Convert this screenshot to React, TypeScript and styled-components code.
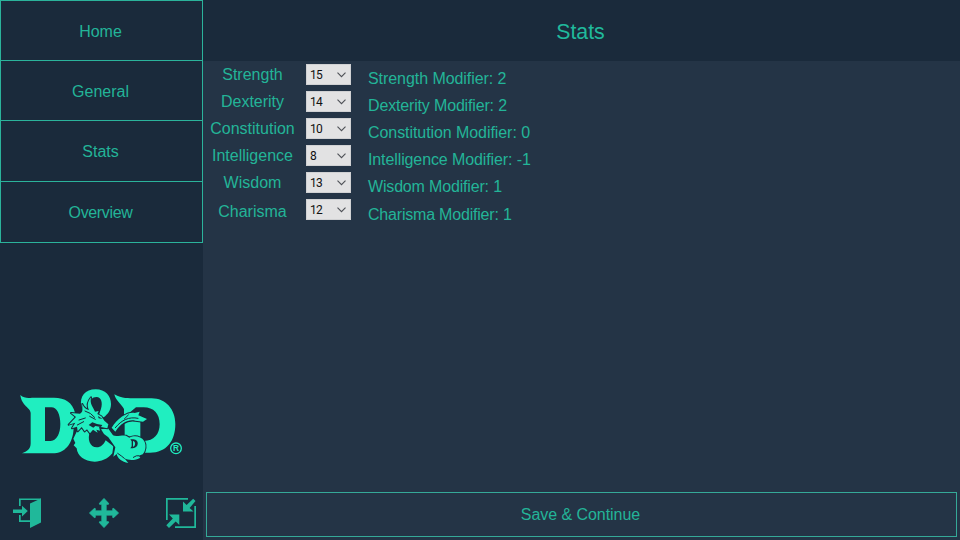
import React, { useState } from 'react';
import styled, { createGlobalStyle } from 'styled-components';

const GlobalStyle = createGlobalStyle`
  * { box-sizing: border-box; }
  body { margin: 0; overflow: hidden; background: #1a2a3b; }
  button { appearance: none; margin: 0; padding: 0; background: none; border: 0; color: inherit; font: inherit; letter-spacing: inherit; }
`;

const Window = styled.div`
  display: grid;
  grid-template-columns: 203px 1fr;
  width: 960px;
  height: 540px;
  background: #1a2a3b;
  color: #23b498;
  font: 16px/20px "Liberation Sans", Arial, sans-serif;
`;

const Sidebar = styled.aside`
  display: flex;
  flex-direction: column;
`;

const Nav = styled.nav`
  display: grid;
  grid-template-rows: 60px 60px 61px 62px;
  border: 0 solid #2bb39b;
  border-width: 0 1px 1px;
  height: 243px;
`;

const NavButton = styled.button<{ $tight: boolean }>`
  border-top: 1px solid #2bb39b;
  padding: ${p => (p.$tight ? '0 2px 0 0' : '2px 2px 0 0')};
  letter-spacing: ${p => (p.$tight ? '-0.35px' : '0')};
`;

const LogoArea = styled.div`
  height: 90px;
  margin: 137px 0 0 10px;
  svg { display: block; }
`;

const Tools = styled.div`
  display: flex;
  justify-content: space-between;
  margin-top: 27px;
  padding: 0 6px 0 12px;
`;

const ToolButton = styled.button`
  width: 32px;
  height: 32px;
  color: #20b89a;
  svg { display: block; }
`;

const Main = styled.main`
  display: flex;
  flex-direction: column;
`;

const Header = styled.header`
  display: flex;
  align-items: center;
  justify-content: center;
  height: 61px;
  padding: 3px 2px 0 0;
  font-size: 21.3px;
  color: #20b99c;
`;

const Panel = styled.section`
  display: flex;
  flex: 1;
  flex-direction: column;
  justify-content: space-between;
  padding: 0 3px 3px;
  background: #243446;
`;

const Stats = styled.div`
  display: grid;
  grid-template-rows: repeat(6, 27px);
  padding-top: 3px;
`;

const StatRow = styled.div`
  display: grid;
  grid-template-columns: 93px 7px 45px 17px 1fr;
`;

const StatLabel = styled.label<{ $drop: number }>`
  grid-column: 1;
  padding-top: ${p => 1 + p.$drop}px;
  text-align: center;
`;

const ModifierText = styled.span<{ $drop: number; $spacing: number }>`
  grid-column: 5;
  padding-top: ${p => 5 + p.$drop}px;
  letter-spacing: ${p => p.$spacing}px;
`;

const Picker = styled.button`
  grid-column: 3;
  display: flex;
  align-items: center;
  justify-content: space-between;
  height: 21px;
  padding: 0 4px 0 3px;
  border: 1px solid #d0d1d3;
  background: #e2e2e3;
  color: #111;
  font: 12px/18px Roboto, sans-serif;
  letter-spacing: -0.7px;
`;

const SaveButton = styled.button`
  height: 45px;
  border: 1px solid #35a998;
  padding-right: 2px;
  letter-spacing: -0.05px;
`;

const Chevron = () => (
  <svg width="9" height="6" viewBox="0 0 9 6" fill="none" stroke="#4e5157" strokeWidth="1.1">
    <path d="M.5 .7 4.5 4.7 8.5 .7" />
  </svg>
);

const ExitIcon = () => (
  <svg width="32" height="32" viewBox="0 0 32 32" fill="currentColor">
    <path d="M7 9V1.5H29V3H8.7V9ZM7 18H8.7V23.3H18V25H7Z" />
    <path d="M18 6.5 29 1.5V25.5L18 31Z" />
    <path d="M1 12.5H10V8.8L15.8 14 10 19.5V16H1Z" />
  </svg>
);

const MoveIcon = () => (
  <svg width="32" height="32" viewBox="0 0 32 32" fill="currentColor" stroke="currentColor" strokeWidth="1" strokeLinejoin="round">
    <path d="M15 1.5 19.5 6.3V7.2H17.1V13.9H23.8V11.5H24.7L29.5 16 24.7 20.5H23.8V18.1H17.1V24.8H19.5V25.7L15 30.5 10.5 25.7V24.8H12.9V18.1H6.2V20.5H5.3L.5 16 5.3 11.5H6.2V13.9H12.9V7.2H10.5V6.3Z" />
  </svg>
);

const ShrinkIcon = () => (
  <svg width="32" height="32" viewBox="0 0 32 32" fill="currentColor">
    <path d="M1 1H23V2.7H2.7V23H1ZM29.3 9H31V31H10V29.3H29.3Z" />
    <path d="M18 4.5V14.5H28.5L24.6 10.9 30.5 4 28.2 1.7 21.6 8Z" />
    <path d="M4 17.5H14.3V28L10.7 24.4 4 31 1.3 28.3 7.8 21.4Z" />
  </svg>
);

const Logo = () => (
  <svg width="180" height="90" viewBox="0 0 540 270" fill="#20eec0">
    <path fillRule="evenodd" d="M31 45C41 54 53 55 66 53H132C165 53 188 68 195 98L190 155C186 190 166 220 127 220H36C51 214 62 208 62 190V99C62 83 35 79 31 45ZM105 82V183H122C141 182 151 159 151 132 151 104 141 82 124 82Z" />
    <path fillRule="evenodd" d="M313 43C337 57 355 54 376 55H425C467 55 496 88 496 132 496 184 469 218 420 218H388V183H402C431 183 449 163 449 133 449 101 431 82 401 82H378L342 112V87C333 71 316 60 313 43Z" />
    <path d="M344 120H391V180L344 166Z" />
    <g transform="translate(165 15)" stroke="#1a2a3b" strokeLinejoin="round">
      <path strokeWidth="0" fillRule="evenodd" d="M49 64C43 35 61 13 92 13 121 13 138 33 138 57 138 76 128 88 116 97L100 95 108 71C114 53 108 36 95 36 80 36 76 46 75 57L62 75Z" />
      <path strokeWidth="6" paintOrder="stroke" d="M40 130 76 138C65 163 75 187 95 187 108 187 116 179 122 166L145 184 142 205C128 222 108 230 89 230 58 230 37 212 35 190L26 181 31 174 25 161Z" />
      <path strokeWidth="6" paintOrder="stroke" d="M129 130 144 151C152 156 166 151 183 152L193 158C209 149 228 154 237 167 245 180 242 198 233 208L221 212 226 218C211 227 191 227 178 220L190 234C171 231 157 220 155 207L145 215 151 187 130 157 117 147 108 133Z" />
      <path strokeWidth="6" paintOrder="stroke" d="M140 128C160 96 190 80 209 84L224 80 220 91 246 102 234 110 211 107C189 103 170 112 151 140Z" />
      <path strokeWidth="6" paintOrder="stroke" d="M52 57C51 73 56 79 45 86L18 84 33 96 11 119 31 113 21 130 36 125 38 139 50 126 59 139 66 133 75 145 84 134 98 143 94 134 105 137 102 125 112 127 127 130 130 118 118 107 109 94 97 87 101 78 90 80C83 64 74 58 78 37 67 50 66 64 72 75 62 72 56 68 52 57Z" />
      <g fill="none" strokeWidth="3" strokeLinecap="round">
        <path d="M60 78Q78 83 89 97M42 105 61 99M37 120 56 110M74 94 91 103" />
        <path d="M151 128C170 105 192 94 219 100M178 102 190 90M159 137 170 143" />
        <path d="M205 217Q215 210 221 212M158 205Q170 213 178 220" />
      </g>
      <path fill="#1a2a3b" strokeWidth="0" d="M99 93 113 102 101 100ZM71 120 82 112 96 117 112 120 108 126 91 123 85 128Z" />
      <path fill="#1a2a3b" fillRule="evenodd" strokeWidth="0" d="M196 163H205C224 163 222 190 203 190H196L200 184V169ZM204 168V185C212 185 213 168 204 168Z" />
    </g>
    <circle cx="498" cy="205" r="16" fill="none" stroke="#20eec0" strokeWidth="4" />
    <text x="498" y="214" textAnchor="middle" fontFamily="Liberation Sans" fontWeight="700" fontSize="25">R</text>
  </svg>
);

const abilities = [
  { name: 'Strength', score: 15, modifier: 2, drop: 0, spacing: -0.06 },
  { name: 'Dexterity', score: 14, modifier: 2, drop: 0, spacing: -0.16 },
  { name: 'Constitution', score: 10, modifier: 0, drop: 0, spacing: -0.07 },
  { name: 'Intelligence', score: 8, modifier: -1, drop: 0, spacing: -0.11 },
  { name: 'Wisdom', score: 13, modifier: 1, drop: 0, spacing: -0.17 },
  { name: 'Charisma', score: 12, modifier: 1, drop: 2, spacing: -0.2 },
];

export default function App() {
  const [page, setPage] = useState('Stats');
  return (
    <>
      <GlobalStyle />
      <Window>
        <Sidebar>
          <Nav>
            {['Home', 'General', 'Stats', 'Overview'].map(name => (
              <NavButton key={name} $tight={name === 'Overview'} onClick={() => setPage(name)}>{name}</NavButton>
            ))}
          </Nav>
          <LogoArea><Logo /></LogoArea>
          <Tools>
            <ToolButton aria-label="Exit"><ExitIcon /></ToolButton>
            <ToolButton aria-label="Move"><MoveIcon /></ToolButton>
            <ToolButton aria-label="Shrink"><ShrinkIcon /></ToolButton>
          </Tools>
        </Sidebar>
        <Main>
          <Header>{page}</Header>
          <Panel>
            <Stats>
              {abilities.map(a => (
                <StatRow key={a.name}>
                  <StatLabel $drop={a.drop}>{a.name}</StatLabel>
                  <Picker>{a.score}<Chevron /></Picker>
                  <ModifierText $drop={a.drop / 2} $spacing={a.spacing}>{a.name} Modifier: {a.modifier}</ModifierText>
                </StatRow>
              ))}
            </Stats>
            <SaveButton>Save &amp; Continue</SaveButton>
          </Panel>
        </Main>
      </Window>
    </>
  );
}
